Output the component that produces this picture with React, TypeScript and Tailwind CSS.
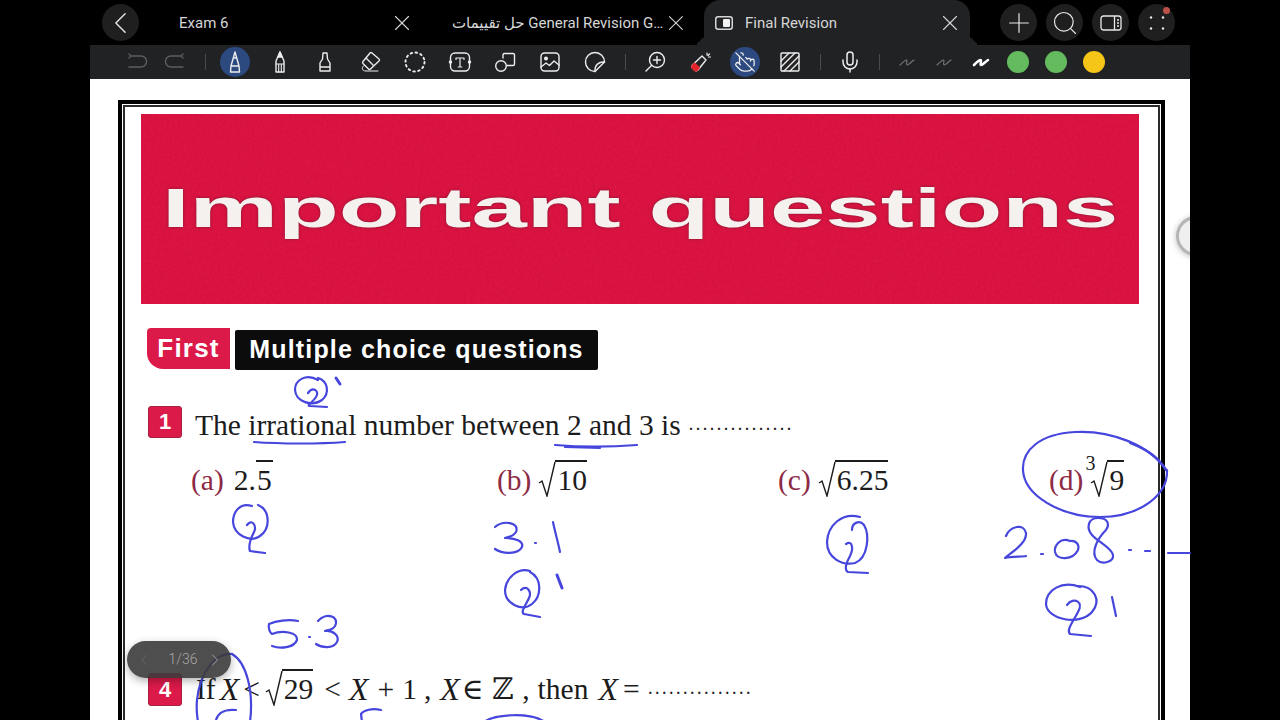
import { ChevronLeft, ChevronRight, Mic, Plus, PointerOff, Search, X } from "lucide-react";
import type { ReactNode } from "react";

const SANS = "font-['Liberation_Sans',Arial,sans-serif]";
const SERIF = "font-['Liberation_Serif','DejaVu_Serif',serif]";

const Icon = ({ children, className = "" }: { children: ReactNode; className?: string }) => (
  <svg width="24" height="24" viewBox="0 0 24 24" fill="none" stroke="currentColor" strokeWidth="1.4" strokeLinecap="round" strokeLinejoin="round" className={className}>
    {children}
  </svg>
);

const Slot = ({ children, w = "w-[45px]" }: { children: ReactNode; w?: string }) => (
  <div className={`${w} h-[34px] shrink-0 flex items-center justify-center`}>{children}</div>
);

const Sep = ({ className }: { className: string }) => <div className={`w-px h-[16px] bg-[#4a4b4e] shrink-0 ${className}`} />;

const RoundBtn = ({ children }: { children: ReactNode }) => (
  <div className="w-[37px] h-[37px] rounded-full bg-[#1f1f20] flex items-center justify-center text-[#e8e8e8] relative shrink-0">{children}</div>
);

const Squiggle = ({ bold }: { bold?: boolean }) => (
  <svg width="20" height="14" viewBox="0 0 20 14" fill="none" stroke={bold ? "#ffffff" : "#77787b"} strokeWidth={bold ? 2.6 : 1.1} strokeLinecap="round">
    <path d="M3 10 C5 8 8 5 9.5 5 C11 5 8.5 9 10 10 C11 10.5 14 7 17 5" />
  </svg>
);

const Dot = ({ color }: { color: string }) => <div className={`w-[22px] h-[22px] rounded-full ${color}`} />;

const Sqrt = ({ children, root, className = "" }: { children: ReactNode; root?: string; className?: string }) => (
  <span className={`inline-flex items-end relative ${className}`}>
    {root && <span className="absolute left-[-5px] top-[-7px] text-[20px] leading-none">{root}</span>}
    <svg width="18" height="36" viewBox="0 0 18 36" fill="none" stroke="#1c1c1c" strokeWidth="1.4" className="mb-[2px] shrink-0">
      <path d="M1 22 L4 20 L9 35 L17 1" />
    </svg>
    <span className="border-t-2 border-[#1c1c1c] leading-[37px] pl-[2px] ml-[-1px]">{children}</span>
  </span>
);

const QuestionBox = ({ n, className }: { n: string; className: string }) => (
  <div className={`${SANS} ${className} w-[34px] rounded-[3px] bg-[#dc1a4a] border border-[#a8203f] flex items-center justify-center text-white font-bold text-[22px] leading-none shrink-0`}>{n}</div>
);

const Option = ({ label, children, w }: { label: string; children: ReactNode; w: string }) => (
  <div className={`${w} shrink-0 flex items-end gap-[7px]`}>
    <span className="text-[#8d2a45] leading-[37px]">{label}</span>
    {children}
  </div>
);

const Dots = ({ className = "" }: { className?: string }) => (
  <span className={`text-[14px] tracking-[3.5px] text-[#222] font-bold ${className}`}>...............</span>
);

const VarX = ({ className = "" }: { className?: string }) => <span className={`italic text-[32px] leading-[37px] ${className}`}>X</span>;

const Sym = ({ children, className = "" }: { children: ReactNode; className?: string }) => (
  <span className={`leading-[37px] ${className}`}>{children}</span>
);

// pen annotations on the page, in page coordinates
const INK = [
  // Q' above irrational
  "M318 380 C306 373 295 380 295 390 C296 402 312 407 322 400 C330 393 328 381 318 378",
  "M308 393 C313 386 320 391 316 397 C312 403 306 406 310 406 L327 407",
  "M254 442 C280 444 320 444 345 442",
  "M555 445 C580 447 610 447 637 445",
  "M565 447 L600 448",
  // under (a)
  "M252 506 C240 502 233 512 233 522 C234 535 250 543 260 536 C271 528 270 510 258 505",
  "M247 525 C252 518 257 526 254 532 C250 540 248 546 250 551 L265 553",
  // (d) ring
  "M1166 470 C1150 445 1110 430 1075 432 C1040 434 1022 450 1023 470 C1024 495 1060 517 1100 517 C1140 517 1168 495 1167 470",
  "M1130 443 C1145 449 1158 456 1166 470 L1165 468",
  // 2.08
  "M1006 536 C1010 526 1024 523 1026 533 C1027 543 1012 552 1005 558 C1012 556 1022 557 1026 556",
  "M1041 554 L1043 554",
  "M1070 541 C1060 537 1054 546 1055 552 C1057 561 1073 560 1078 550 C1080 544 1075 540 1070 541",
  "M1098 518 C1088 518 1086 528 1092 535 C1098 542 1112 548 1113 555 C1114 562 1102 565 1097 560 C1090 552 1098 538 1106 530 C1110 524 1108 518 1098 518",
  "M1129 550 L1131 550",
  "M1145 551 L1150 551",
  "M1168 553 L1190 553",
  // Q1 under (d)
  "M1080 587 C1062 580 1046 590 1046 604 C1047 620 1080 626 1092 612 C1102 600 1094 586 1078 586",
  "M1067 605 C1074 596 1084 602 1078 612 C1073 622 1066 630 1070 634 L1091 636",
  "M1112 597 L1116 616",
  // under (c)
  "M860 517 C842 512 828 525 827 542 C827 558 842 566 855 563 C868 558 870 535 864 525 C860 520 852 522 852 530",
  "M846 544 C852 540 854 548 850 556 C846 563 844 570 848 572 L868 573",
  // 3.1
  "M495 527 C503 520 520 522 516 532 C513 537 507 537 505 538 C515 538 524 541 522 547 C518 555 502 554 495 549",
  "M535 543 L536 543",
  "M553 522 C555 532 558 542 560 552",
  // Q' under (b)
  "M530 571 C518 567 506 578 505 590 C505 604 522 612 532 604 C542 596 542 578 530 572",
  "M521 590 C527 584 532 592 529 598 C526 605 520 612 524 614 L540 617",
  // 5.3
  "M298 621 C288 619 276 621 269 624 C268 628 270 633 272 634 C282 630 298 632 297 640 C294 648 280 649 272 646",
  "M309 637 L310 637",
  "M318 621 C326 612 340 616 335 626 C332 631 326 630 325 631 C333 630 340 636 337 642 C333 649 322 648 316 644",
  // ring round x
  "M232 654 C216 652 200 672 197 700 C196 710 197 716 198 722",
  "M232 654 C246 662 254 690 250 722",
  "M216 720 C218 712 226 709 236 710",
  // next row, cut off
  "M381 710 C372 708 364 710 361 714 L362 722",
  "M484 722 C495 714 530 712 545 722",
];

// the ticks are pressed harder than the rest
const INK_HEAVY = ["M336 378 L340 384", "M557 575 L562 588"];

export default function App() {
  return (
    <div className="relative w-[1280px] h-[720px] bg-black overflow-hidden font-['Roboto','DejaVu_Sans',sans-serif] flex justify-center">
      <div className="w-[1100px] h-full flex flex-col shrink-0">
        {/* TABS */}
        <div className="h-[45px] shrink-0 flex items-center text-[15px] text-[#d6d6d6]">
          <div className="ml-[12px]">
            <RoundBtn><ChevronLeft size={38} strokeWidth={0.9} /></RoundBtn>
          </div>
          <div className="w-[289px] pl-[40px] pr-[13px] flex items-center justify-between shrink-0">
            <span className="mt-px">Exam 6</span>
            <X size={26} strokeWidth={1} />
          </div>
          <div className="w-[276px] pl-[24px] pr-[15px] flex items-center justify-between shrink-0">
            <span className="mt-px whitespace-nowrap">حل تقييمات General Revision G…</span>
            <X size={26} strokeWidth={1} />
          </div>
          <div className="relative w-[266px] h-full shrink-0 bg-[#212224] rounded-t-[16px] pl-[11px] pr-[7px] flex items-center">
            <div className="absolute left-[-14px] bottom-0 w-[14px] h-[14px] rounded-br-[14px] shadow-[7px_7px_0_0_#212224]" />
            <div className="absolute right-[-14px] bottom-0 w-[14px] h-[14px] rounded-bl-[14px] shadow-[-7px_7px_0_0_#212224]" />
            <svg width="18" height="14" viewBox="0 0 18 14" fill="none" className="mr-[12px]">
              <rect x="0.75" y="0.75" width="16.5" height="12.5" rx="2.5" stroke="#d6d6d6" strokeWidth="1.5" />
              <rect x="8" y="3" width="7" height="8" rx="1" fill="#f2f2f2" />
            </svg>
            <span className="mt-px">Final Revision</span>
            <X size={26} strokeWidth={1} className="ml-auto" />
          </div>
          <div className="ml-[30px] flex items-center gap-[9px]">
            <RoundBtn><Plus size={32} strokeWidth={0.9} /></RoundBtn>
            <RoundBtn><Search size={28} strokeWidth={1} /></RoundBtn>
            <RoundBtn>
              <svg width="22" height="16" viewBox="0 0 22 16" fill="none" stroke="currentColor" strokeWidth="1.3">
                <rect x="1" y="1" width="20" height="14" rx="2.5" />
                <path d="M14.5 1 V15 M17 5 H19 M17 8 H19 M17 11 H19" />
              </svg>
            </RoundBtn>
            <RoundBtn>
              <svg width="16" height="16" viewBox="0 0 16 16" fill="currentColor">
                <circle cx="2" cy="2.5" r="1.2" /><circle cx="14" cy="2.5" r="1.2" /><circle cx="2" cy="13.5" r="1.2" /><circle cx="14" cy="13.5" r="1.2" />
              </svg>
              <div className="absolute right-[5px] top-[3px] w-[7px] h-[7px] rounded-full bg-[#bb5149]" />
            </RoundBtn>
          </div>
        </div>

        {/* TOOLBAR */}
        <div className="h-[34px] shrink-0 bg-[#212224] pl-[28px] flex items-center text-[#ededed]">
          <Slot w="w-[38px]">
            <Icon className="text-[#5d5e61]"><path d="M6 6 H16 a4.5 4.5 0 0 1 0 11 H4 M6 6 L4 8 M6 6 L4 4" /></Icon>
          </Slot>
          <Slot w="w-[38px]">
            <Icon className="text-[#5d5e61]"><path d="M18 6 H8 a4.5 4.5 0 0 0 0 11 H20 M18 6 L20 8 M18 6 L20 4" /></Icon>
          </Slot>
          <Sep className="ml-[11px] mr-[6px]" />
          <Slot>
            <div className="w-[30px] h-[30px] rounded-full bg-[#2c4a80] flex items-center justify-center">
              <Icon><path d="M12 2 L8 16 L7.5 22 H16.5 L16 16 Z M8 16 H16 M10.5 8 H13.5" /></Icon>
            </div>
          </Slot>
          <Slot>
            <Icon><path d="M12 2 L8 11 V22 H16 V11 Z" /><path d="M12 2 L10 7 H14 Z" fill="currentColor" /><path d="M8 14 H16 M10.7 14 V22 M13.3 14 V22" strokeWidth="1.1" /></Icon>
          </Slot>
          <Slot>
            <Icon><path d="M10 3 H14 L14.5 9 L17 13 V21 H7 V13 L9.5 9 Z M7 17 H17" /></Icon>
          </Slot>
          <Slot>
            <Icon>
              <path d="M14 3 L21 9 C21.6 9.6 21.6 10.4 21 11 L12.5 19 C11.9 19.6 11.1 19.6 10.5 19 L5 13.5 C4.4 12.9 4.4 12.1 5 11.5 L12 3 C12.6 2.5 13.4 2.5 14 3 Z" />
              <path d="M8.5 8.5 L15 15" />
              <path d="M6 15.5 C3 18 4 21 8 21 H20" strokeWidth="1" />
            </Icon>
          </Slot>
          <Slot>
            <Icon><circle cx="12" cy="12" r="9.5" strokeWidth="1.9" strokeDasharray="1.6 3.4" /></Icon>
          </Slot>
          <Slot>
            <Icon>
              <rect x="2.5" y="3" width="19" height="18" rx="4.5" />
              <path d="M8 9.5 V8 H16 V9.5 M12 8 V17 M10.2 17 H13.8" strokeWidth="1.2" />
              <circle cx="2.5" cy="12" r="1" fill="currentColor" />
              <circle cx="21.5" cy="12" r="1" fill="currentColor" />
            </Icon>
          </Slot>
          <Slot>
            <Icon>
              <path d="M10 8 V5 C10 4 10.5 3.5 11.5 3.5 H20 C21 3.5 21.5 4 21.5 5 V14 C21.5 15 21 15.5 20 15.5 H14" />
              <circle cx="8" cy="16" r="5.3" />
            </Icon>
          </Slot>
          <Slot>
            <Icon>
              <rect x="3" y="3" width="18" height="18" rx="3.5" />
              <circle cx="8" cy="8.5" r="1.3" fill="currentColor" />
              <path d="M3 17 L8 13 L11.5 15.5 L16 11 L21 15" />
            </Icon>
          </Slot>
          <Slot>
            <Icon>
              <path d="M21.5 12 A9.5 9.5 0 1 0 12 21.5 Z" />
              <path d="M21.5 12 C16 11.5 11.5 15 12 21.5" />
            </Icon>
          </Slot>
          <Sep className="ml-[8px] mr-[6px]" />
          <Slot>
            <Icon>
              <circle cx="14" cy="10" r="7.5" />
              <path d="M14 6.5 V13.5 M10.5 10 H17.5 M8.5 15.5 L3 21" />
            </Icon>
          </Slot>
          <Slot>
            <Icon>
              <path d="M14 6 L18 10 L10 20 C9 21 7.5 21 6.5 20 L4.5 18 C3.5 17 3.5 15.8 4.5 15 Z" />
              <path d="M9 20.5 C8 21 7 21 6 20 L4.5 18.5 C3.7 17.5 3.7 16 4.5 15.2 L6.5 13.3 L11.3 17.6 Z" fill="#e3242b" stroke="#e3242b" />
              <path d="M19 3 V5 M22.5 7 H20.5 M21.5 4 L20 5.5" strokeWidth="1.2" />
            </Icon>
          </Slot>
          <Slot>
            <div className="w-[30px] h-[30px] rounded-full bg-[#2c4a80] flex items-center justify-center">
              <PointerOff size={22} strokeWidth={1.4} />
            </div>
          </Slot>
          <Slot>
            <Icon>
              <rect x="3" y="3" width="18" height="18" rx="1" />
              <path d="M3 11 L11 3 M3 17 L17 3 M6 21 L21 6 M12 21 L21 12" />
            </Icon>
          </Slot>
          <Sep className="ml-[8px] mr-[6px]" />
          <Slot>
            <Mic size={24} strokeWidth={1.5} />
          </Slot>
          <Sep className="ml-[7px] mr-[8px]" />
          <Slot w="w-[37px]"><Squiggle /></Slot>
          <Slot w="w-[37px]"><Squiggle /></Slot>
          <Slot w="w-[37px]"><Squiggle bold /></Slot>
          <Slot w="w-[38px]"><Dot color="bg-[#64bb5e]" /></Slot>
          <Slot w="w-[38px]"><Dot color="bg-[#64bb5e]" /></Slot>
          <Slot w="w-[38px]"><Dot color="bg-[#f5c518]" /></Slot>
        </div>

        {/* PAGE */}
        <div className="relative flex-1 bg-white overflow-hidden pl-[28px] pt-[21px]">
          <div className="w-[1047px] h-[700px] border-4 border-black p-px">
            <div className={`${SERIF} h-full border-2 border-[#2a2a2a] pl-[16px] pr-[19px] pt-[7px] text-[29.5px] text-[#1c1c1c]`}>
              <div className={`${SANS} relative h-[190px] bg-[#de1542] flex items-center justify-center overflow-hidden`}>
                {/* paper grain of the scanned banner */}
                <svg width="998" height="190" className="absolute inset-0 opacity-[0.16]">
                  <filter id="grain">
                    <feTurbulence type="fractalNoise" baseFrequency="0.35" numOctaves="3" seed="4" />
                    <feColorMatrix values="0 0 0 0 0.35  0 0 0 0 0  0 0 0 0 0.05  0 0 0 1.6 -0.3" />
                  </filter>
                  <rect width="998" height="190" filter="url(#grain)" />
                </svg>
                <span className="relative scale-x-[1.777] whitespace-nowrap text-[56px] leading-none font-bold text-[#f4f1ef] mt-[-3px] [text-shadow:0_0_2px_rgba(80,30,40,0.8)]">Important questions</span>
              </div>

              <div className={`${SANS} mt-[24px] ml-[6px] flex items-start gap-[5px] font-bold text-white`}>
                <div className="w-[83px] h-[41px] bg-[#dc1a4a] rounded-tl-[4px] rounded-bl-[16px] flex items-center justify-center text-[26px] tracking-[1.2px]">First</div>
                <div className="w-[363px] h-[40px] mt-[2px] bg-[#0c0c0c] rounded-[2px] flex items-center justify-center text-[25px] tracking-[1.15px] whitespace-nowrap">Multiple choice questions</div>
              </div>

              <div className="mt-[36px] ml-[7px] flex items-start gap-[13px]">
                <QuestionBox n="1" className="h-[32px]" />
                <div className="whitespace-nowrap leading-[32px] mt-[3px]">The irrational number between 2 and 3 is <Dots className="ml-[1px] align-[5px]" /></div>
              </div>

              <div className="mt-[18px] pl-[50px] flex items-end">
                <Option label="(a)" w="w-[306px]">
                  <span className="flex items-end ml-[3px]">
                    <span className="leading-[37px]">2.</span>
                    <span className="border-t-2 border-[#1c1c1c] leading-[37px] px-px">5</span>
                  </span>
                </Option>
                <Option label="(b)" w="w-[281px]"><Sqrt>10</Sqrt></Option>
                <Option label="(c)" w="w-[271px]"><Sqrt>6.25</Sqrt></Option>
                <Option label="(d)" w="w-[120px]"><Sqrt root="3">9</Sqrt></Option>
              </div>

              <div className="mt-[174px] ml-[7px] flex items-start gap-[14px]">
                <QuestionBox n="4" className="h-[33px]" />
                <div className="whitespace-nowrap flex items-end mt-[-4px]">
                  <Sym>If</Sym>
                  <VarX className="ml-[4px]" />
                  <Sym className="ml-[4px]">&lt;</Sym>
                  <Sqrt className="ml-[5px]">29</Sqrt>
                  <Sym className="ml-[11px]">&lt;</Sym>
                  <VarX className="ml-[8px]" />
                  <Sym className="ml-[9px]">+</Sym>
                  <Sym className="ml-[8px]">1</Sym>
                  <Sym className="ml-[7px]">,</Sym>
                  <VarX className="ml-[9px]" />
                  <Sym className="ml-[2px]">∈</Sym>
                  <Sym className="ml-[8px]">ℤ</Sym>
                  <Sym className="ml-[9px]">,</Sym>
                  <Sym className="ml-[8px]">then</Sym>
                  <VarX className="ml-[10px]" />
                  <Sym className="ml-[5px]">=</Sym>
                  <span className="ml-[9px] mb-[9px] leading-none"><Dots /></span>
                </div>
              </div>
            </div>
          </div>

          {/* edge of a floating button, mostly off the page */}
          <div className="absolute right-[-26px] top-[137px] w-[40px] h-[40px] rounded-full bg-[#efefef] border-[3px] border-[#b4b6b6] blur-[0.6px] shadow-[0_1px_6px_rgba(0,0,0,0.25)]" />
        </div>
      </div>

      <svg width="1280" height="720" viewBox="0 0 1280 720" fill="none" stroke="#4646dd" strokeWidth="2.2" strokeLinecap="round" strokeLinejoin="round" className="absolute inset-0 pointer-events-none">
        {INK.map((d) => (
          <path key={d} d={d} />
        ))}
        {INK_HEAVY.map((d) => (
          <path key={d} d={d} strokeWidth="3" />
        ))}
      </svg>

      {/* page counter */}
      <div className="absolute left-[127px] top-[641px] w-[104px] h-[37px] rounded-full bg-[#3b3b3b]/90 shadow-[0_3px_8px_rgba(0,0,0,0.3)] flex items-center justify-between pl-[8px] pr-[6px] text-[14px] text-[#a8a8a8] font-light">
        <ChevronLeft size={18} strokeWidth={1.1} className="text-[#6c6c6c]" />
        <span className="ml-[8px]">1/36</span>
        <ChevronRight size={20} strokeWidth={1.1} />
      </div>
    </div>
  );
}
